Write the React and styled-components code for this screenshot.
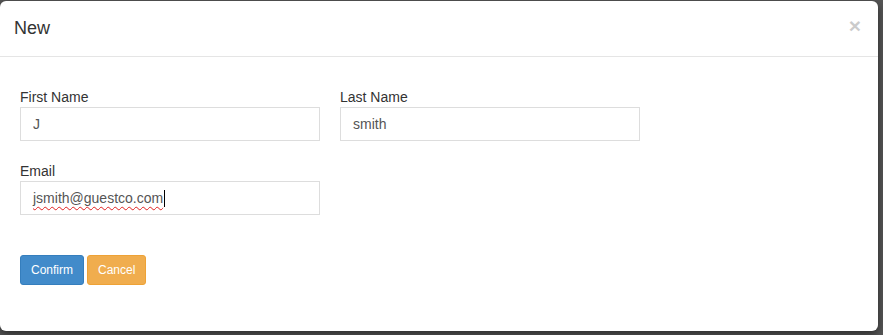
import React from 'react';
import styled, { createGlobalStyle } from 'styled-components';

const GlobalStyle = createGlobalStyle`
  html, body {
    margin: 0;
    padding: 0;
    background: #555;
    font-family: "Liberation Sans", Arial, sans-serif;
  }
  * { box-sizing: border-box; }
`;

const Backdrop = styled.div`
  width: 883px;
  height: 335px;
  padding-top: 1px;
  overflow: hidden;
`;

const Modal = styled.div`
  width: 878px;
  height: 330px;
  background: #fff;
  border-radius: 6px;
  box-shadow: 0 3px 9px rgba(0, 0, 0, 0.5);
  display: flex;
  flex-direction: column;
`;

const Header = styled.div`
  display: flex;
  align-items: center;
  justify-content: space-between;
  padding: 15px 15px 16px 14px;
  border-bottom: 1px solid #e5e5e5;
`;

const Title = styled.h4`
  margin: 0;
  font-size: 18px;
  font-weight: 500;
  line-height: 24px;
  color: #333;
`;

const Close = styled.button`
  background: none;
  border: 0;
  padding: 0;
  margin-top: -6px;
  margin-right: 2px;
  font-family: "Liberation Sans", Arial, sans-serif;
  font-size: 21px;
  font-weight: bold;
  line-height: 1;
  color: #000;
  opacity: 0.2;
  cursor: pointer;
`;

const Body = styled.div`
  padding: 30px 20px 0 20px;
`;

const Row = styled.div`
  display: flex;
  gap: 20px;
  margin-bottom: 20px;
`;

const Group = styled.div`
  width: 300px;
  display: flex;
  flex-direction: column;
`;

const Label = styled.label`
  font-size: 14px;
  line-height: 20px;
  color: #333;
`;

const Input = styled.input`
  width: 300px;
  height: 34px;
  padding: 6px 12px;
  border: 1px solid #ddd;
  border-radius: 0;
  font-family: "Liberation Sans", Arial, sans-serif;
  font-size: 14px;
  color: #555;
  outline: none;
`;

const FakeInput = styled.div`
  width: 300px;
  height: 34px;
  padding: 6px 12px;
  border: 1px solid #ddd;
  font-size: 14px;
  line-height: 20px;
  color: #555;
  display: flex;
  align-items: center;
`;

const Misspelled = styled.span`
  text-decoration: underline wavy #e02020;
  text-decoration-thickness: 1px;
  text-underline-offset: 3px;
`;

const Caret = styled.span`
  display: inline-block;
  width: 1px;
  height: 17px;
  background: #000;
  margin-left: 1px;
`;

const Actions = styled.div`
  display: flex;
  gap: 3px;
  margin-top: 40px;
`;

const Button = styled.button`
  height: 30px;
  padding: 5px 10px;
  font-family: "Liberation Sans", Arial, sans-serif;
  font-size: 12px;
  line-height: 18px;
  color: #fff;
  border-radius: 3px;
  border: 1px solid ${(p) => (p.$variant === 'warning' ? '#eea236' : '#357ebd')};
  background: ${(p) => (p.$variant === 'warning' ? '#f0ad4e' : '#428bca')};
  cursor: pointer;
`;

export default function App() {
  return (
    <>
      <GlobalStyle />
      <Backdrop>
        <Modal>
          <Header>
            <Title>New</Title>
            <Close aria-label="Close">×</Close>
          </Header>
          <Body>
            <Row>
              <Group>
                <Label>First Name</Label>
                <Input defaultValue="J" />
              </Group>
              <Group>
                <Label>Last Name</Label>
                <Input defaultValue="smith" />
              </Group>
            </Row>
            <Row>
              <Group>
                <Label>Email</Label>
                <FakeInput>
                  <Misspelled>jsmith@guestco.com</Misspelled>
                  <Caret />
                </FakeInput>
              </Group>
            </Row>
            <Actions>
              <Button>Confirm</Button>
              <Button $variant="warning">Cancel</Button>
            </Actions>
          </Body>
        </Modal>
      </Backdrop>
    </>
  );
}
